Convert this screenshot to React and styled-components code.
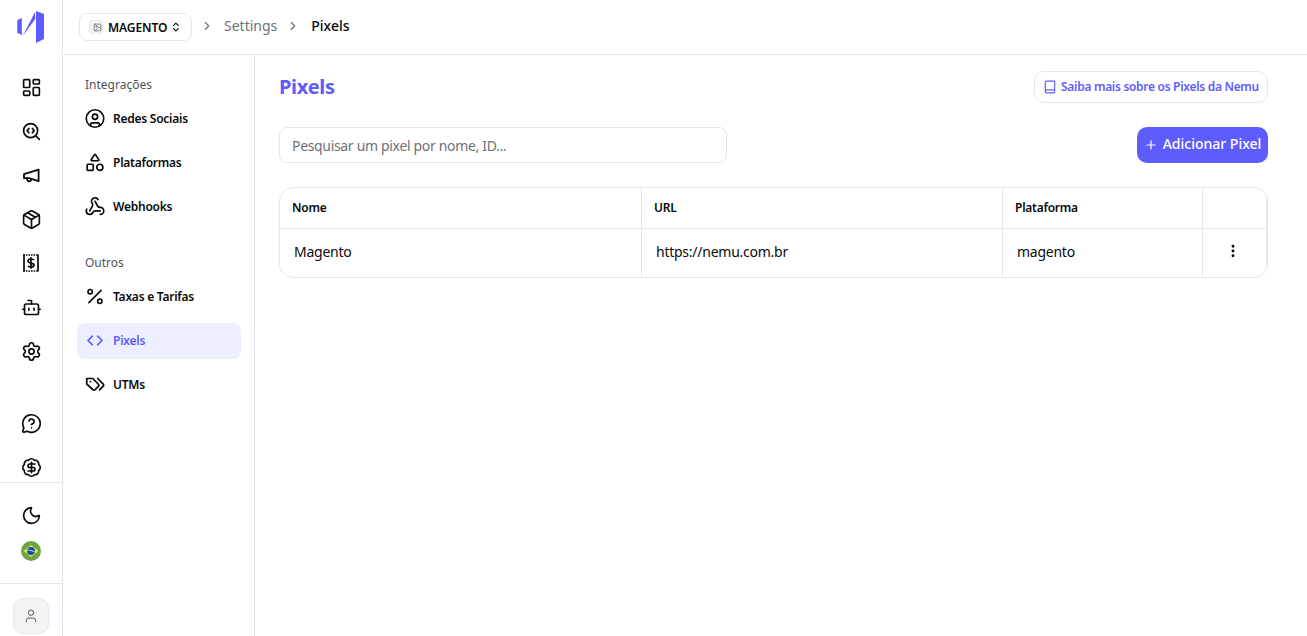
import React from 'react';
import styled, { createGlobalStyle } from 'styled-components';
import {
  LayoutDashboard, SearchCode, Package, Bot, Settings, MessageCircleQuestion, BadgeDollarSign,
  Moon, User, CircleUser, Shapes, Webhook, Percent, ChevronsLeftRight, Book, Plus,
  EllipsisVertical, ChevronRight, ChevronsUpDown, Image,
} from 'lucide-react';

const primary = '#5f5cff';
const line = '#e2e8f0';
const ink = '#0a0a0a';

const Global = createGlobalStyle`
  html, body { margin: 0; padding: 0; height: 100%; background: #fff; }
  #root { height: 100%; }
  * { box-sizing: border-box; }
  body { font-family: "Noto Sans", "Open Sans", sans-serif; color: ${ink}; }
`;

const Page = styled.div`
  display: grid;
  grid-template-columns: 63px 1fr;
  height: 636px;
  overflow: hidden;
`;

const Rail = styled.nav`
  display: flex;
  flex-direction: column;
  align-items: stretch;
  border-right: 1px solid ${line};
  height: 636px;
`;

const LogoBox = styled.div`
  height: 55px;
  flex: none;
  svg { display: block; }
`;

const RailGroup = styled.div`
  display: flex;
  flex-direction: column;
  align-items: center;
  gap: 22px;
  padding-top: ${p => p.$top || 0}px;
  padding-bottom: ${p => p.$bottom || 0}px;
  border-top: ${p => (p.$ruled ? `1px solid ${line}` : 'none')};
  svg { display: block; }
`;

const RailIcon = styled.div`
  width: 22px;
  height: 22px;
  display: flex;
  align-items: center;
  justify-content: center;
  color: ${ink};
`;

const Spacer = styled.div`
  height: ${p => p.$h}px;
  flex: none;
`;

const AvatarBtn = styled.button`
  width: 36px;
  height: 36px;
  margin: 0 auto;
  padding: 0;
  display: flex;
  align-items: center;
  justify-content: center;
  background: #f3f4f6;
  border: 1px solid ${line};
  border-radius: 10px;
  color: #5b5b5b;
`;

const Right = styled.div`
  display: flex;
  flex-direction: column;
  min-width: 0;
`;

const Header = styled.header`
  height: 55px;
  flex: none;
  display: flex;
  align-items: center;
  padding: 0 0 4px 16px;
  border-bottom: 1px solid ${line};
`;

const Store = styled.button`
  height: 28px;
  width: 113px;
  margin-top: 4px;
  display: flex;
  align-items: center;
  padding: 0 9px;
  background: #fff;
  border: 1px solid ${line};
  border-radius: 8px;
  font: 600 12px "Noto Sans", sans-serif;
  letter-spacing: -0.1px;
  color: ${ink};
  svg:last-child { margin-left: 3px; }
`;

const StoreThumb = styled.span`
  width: 14px;
  height: 14px;
  margin-right: 5px;
  display: flex;
  align-items: center;
  justify-content: center;
  background: #f3f4f6;
  border: 1px solid ${line};
  border-radius: 3px;
  color: #444;
`;

const Crumb = styled.span`
  font-size: 14px;
  font-weight: ${p => (p.$current ? 500 : 400)};
  color: ${p => (p.$current ? ink : '#71717a')};
`;

const CrumbSep = styled.span`
  display: flex;
  width: 14px;
  margin: 2px ${p => p.$right}px 0 ${p => p.$left}px;
  color: #71717a;
`;

const Body = styled.div`
  flex: 1;
  display: flex;
  min-height: 0;
`;

const Side = styled.aside`
  width: 192px;
  flex: none;
  padding: 20px 13px 0 14px;
  border-right: 1px solid ${line};
`;

const SideLabel = styled.div`
  height: 20px;
  padding-left: 8px;
  margin-bottom: 6px;
  margin-top: ${p => p.$top || 0}px;
  font-size: 12px;
  line-height: 20px;
  color: #52525b;
`;

const SideList = styled.div`
  display: flex;
  flex-direction: column;
  gap: 8px;
`;

const SideItem = styled.a`
  height: 36px;
  display: flex;
  align-items: center;
  gap: 7px;
  padding: 0 7px 2px;
  border-radius: 8px;
  font-size: 12px;
  font-weight: 600;
  letter-spacing: -0.25px;
  color: ${p => (p.$active ? primary : ink)};
  background: ${p => (p.$active ? '#ecefff' : 'transparent')};
  svg { flex: none; width: 22px; }
`;

const Main = styled.main`
  flex: 1;
  min-width: 0;
  padding: 16px 39px 0 24px;
`;

const TitleRow = styled.div`
  display: flex;
  align-items: center;
  justify-content: space-between;
  height: 32px;
  margin-bottom: 24px;
`;

const Title = styled.h1`
  margin: -2px 0 0;
  font-size: 20px;
  font-weight: 700;
  letter-spacing: -0.3px;
  color: ${primary};
`;

const InfoBtn = styled.button`
  height: 32px;
  width: 234px;
  display: flex;
  align-items: center;
  justify-content: center;
  gap: 4px;
  padding: 0 0 1px;
  background: #fff;
  border: 1px solid ${line};
  border-radius: 10px;
  color: ${primary};
  font: 600 12px "Noto Sans", sans-serif;
  letter-spacing: -0.3px;
`;

const ToolRow = styled.div`
  display: flex;
  justify-content: space-between;
  margin-bottom: 24px;
`;

const Search = styled.input`
  width: 448px;
  height: 36px;
  padding: 0 12px;
  border: 1px solid ${line};
  border-radius: 8px;
  outline: none;
  font: 400 14px "Noto Sans", sans-serif;
  letter-spacing: -0.33px;
  &::placeholder { color: #71717a; opacity: 1; }
`;

const AddBtn = styled.button`
  width: 131px;
  height: 36px;
  display: flex;
  align-items: center;
  justify-content: center;
  gap: 5px;
  padding: 0 0 3px;
  border: 0;
  border-radius: 10px;
  background: ${primary};
  color: #fff;
  font: 500 14px "Noto Sans", sans-serif;
  svg { margin-top: 3px; }
`;

const Table = styled.div`
  border: 1px solid ${line};
  border-radius: 14px;
  overflow: hidden;
`;

const Row = styled.div`
  display: grid;
  grid-template-columns: 362px 361px 200px 1fr;
  height: ${p => p.$h}px;
  border-top: ${p => (p.$ruled ? `1px solid ${line}` : 'none')};
`;

const Cell = styled.div`
  display: flex;
  align-items: center;
  padding-left: ${p => p.$pad}px;
  padding-bottom: ${p => p.$lift}px;
  font-size: ${p => p.$size}px;
  font-weight: ${p => p.$weight};
  letter-spacing: ${p => p.$track}px;
  border-right: 1px solid ${line};
`;

const HeadCell = p => <Cell $pad={12} $lift={2} $size={12} $weight={600} $track={-0.25} {...p} />;
const BodyCell = p => <Cell $pad={14} $lift={4} $size={14} $weight={400} $track={-0.25} {...p} />;

// megaphone, receipt, tags, flag and logo are drawn by hand, the packages have no match
const MegaphoneIcon = () => (
  <svg width="20" height="20" viewBox="0 0 20 20" fill="none" stroke="currentColor" strokeWidth="1.8" strokeLinejoin="round" strokeLinecap="round">
    <path d="M17.600 4.600v11.600L8 13.200H3V9.200z" />
    <path d="M6.200 13.400c-.5 1.800.5 3 1.900 3 1.100 0 1.900-.7 2-1.900" />
  </svg>
);

const ReceiptIcon = () => (
  <svg width="20" height="20" viewBox="0 0 20 20" fill="none" stroke="currentColor" strokeWidth="1.700">
    <path d="M3 1.500v17M17 1.500v17" />
    <path d="M2.200 2h15.600M2.200 18h15.600" strokeDasharray="1.600 1" />
    <path d="M13 7.200c-.4-.8-1.400-1.200-3-1.200-1.800 0-3 .7-3 2 0 2.900 6 1.200 6 4 0 1.300-1.200 2-3 2-1.600 0-2.600-.4-3-1.200M10 4.200v11.600" />
  </svg>
);

const TagsIcon = () => (
  <svg width="22" height="22" viewBox="0 0 24 24" fill="none" stroke="currentColor" strokeWidth="1.900" strokeLinecap="round" strokeLinejoin="round">
    <path d="M3 6h6.500l6 6c.8.8.8 2 0 2.800l-3.200 3.200c-.8.8-2 .8-2.800 0L3 12z" />
    <path d="M7 9.500v-.01" />
    <path d="m15 6 6 6.200c.6.600.6 1.500 0 2.100L17 18.400" />
  </svg>
);

const Flag = () => (
  <svg width="20" height="20" viewBox="0 0 20 20">
    <circle cx="10" cy="10" r="10" fill="#6da544" />
    <path d="M10 3.900 17.400 10 10 16.100 2.600 10z" fill="#ffda44" />
    <circle cx="10" cy="10" r="3.900" fill="#0052b4" />
    <path d="M6.400 9.100c2.500-.2 5 .5 7.100 2" stroke="#f0f0f0" strokeWidth="0.900" fill="none" />
  </svg>
);

const Logo = () => (
  <svg width="62" height="55" viewBox="0 0 62 55" fill={primary}>
    <path d="M17.300 20 21.800 18V33L22.200 35 17.300 33z" />
    <path d="M23 35.500 35 12 35.300 19z" />
    <path d="M36 11 44 14V39L36 43z" />
  </svg>
);

const railIcon = { size: 21, strokeWidth: 1.9 };
const sideIcon = { size: 21, strokeWidth: 1.9 };

export default function App() {
  return (
    <Page>
      <Global />
      <Rail>
        <LogoBox><Logo /></LogoBox>
        <Spacer $h={21} />
        <RailGroup>
          <RailIcon><LayoutDashboard {...railIcon} /></RailIcon>
          <RailIcon><SearchCode {...railIcon} /></RailIcon>
          <RailIcon><MegaphoneIcon /></RailIcon>
          <RailIcon><Package {...railIcon} /></RailIcon>
          <RailIcon><ReceiptIcon /></RailIcon>
          <RailIcon><Bot {...railIcon} /></RailIcon>
          <RailIcon><Settings {...railIcon} /></RailIcon>
        </RailGroup>
        <Spacer $h={50} />
        <RailGroup $bottom={4}>
          <RailIcon><MessageCircleQuestion {...railIcon} /></RailIcon>
          <RailIcon><BadgeDollarSign {...railIcon} /></RailIcon>
        </RailGroup>
        <RailGroup $ruled $top={21} $bottom={14}>
          <RailIcon><Moon {...railIcon} /></RailIcon>
        </RailGroup>
        <RailGroup>
          <RailIcon><Flag /></RailIcon>
        </RailGroup>
        <Spacer $h={21} />
        <RailGroup $ruled $top={14}>
          <AvatarBtn aria-label="Conta"><User size={16} strokeWidth={1.5} /></AvatarBtn>
        </RailGroup>
      </Rail>

      <Right>
        <Header>
          <Store>
            <StoreThumb><Image size={11} strokeWidth={1.6} /></StoreThumb>
            MAGENTO
            <ChevronsUpDown size={14} strokeWidth={2.2} />
          </Store>
          <CrumbSep $left={8} $right={10}><ChevronRight size={14} /></CrumbSep>
          <Crumb>Settings</Crumb>
          <CrumbSep $left={9} $right={11}><ChevronRight size={14} /></CrumbSep>
          <Crumb $current>Pixels</Crumb>
        </Header>

        <Body>
          <Side>
            <SideLabel>Integrações</SideLabel>
            <SideList>
              <SideItem><CircleUser {...sideIcon} />Redes Sociais</SideItem>
              <SideItem><Shapes {...sideIcon} />Plataformas</SideItem>
              <SideItem><Webhook {...sideIcon} />Webhooks</SideItem>
            </SideList>
            <SideLabel $top={28}>Outros</SideLabel>
            <SideList>
              <SideItem><Percent {...sideIcon} />Taxas e Tarifas</SideItem>
              <SideItem $active><ChevronsLeftRight {...sideIcon} />Pixels</SideItem>
              <SideItem><TagsIcon />UTMs</SideItem>
            </SideList>
          </Side>

          <Main>
            <TitleRow>
              <Title>Pixels</Title>
              <InfoBtn><Book size={14} strokeWidth={2} />Saiba mais sobre os Pixels da Nemu</InfoBtn>
            </TitleRow>
            <ToolRow>
              <Search placeholder="Pesquisar um pixel por nome, ID..." />
              <AddBtn><Plus size={14} />Adicionar Pixel</AddBtn>
            </ToolRow>
            <Table>
              <Row $h={40}>
                <HeadCell>Nome</HeadCell>
                <HeadCell>URL</HeadCell>
                <HeadCell>Plataforma</HeadCell>
                <HeadCell />
              </Row>
              <Row $h={49} $ruled>
                <BodyCell>Magento</BodyCell>
                <BodyCell>https://nemu.com.br</BodyCell>
                <BodyCell>magento</BodyCell>
                <BodyCell $pad={22}><EllipsisVertical size={16} strokeWidth={2.4} /></BodyCell>
              </Row>
            </Table>
          </Main>
        </Body>
      </Right>
    </Page>
  );
}
